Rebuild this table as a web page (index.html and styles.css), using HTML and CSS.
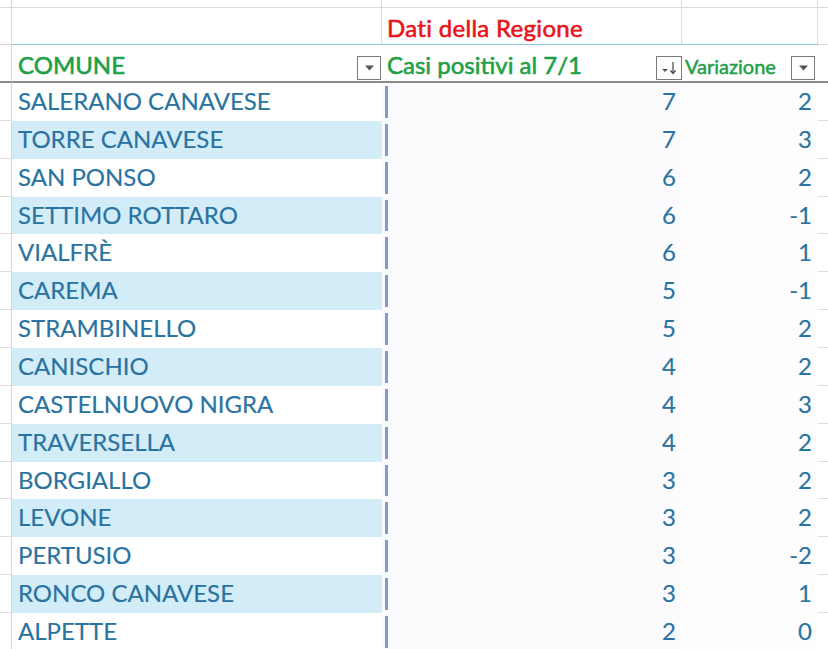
FILE: index.html
```html
<!DOCTYPE html>
<html lang="it">
<head>
<meta charset="utf-8">
<link rel="stylesheet" href="styles.css">
</head>
<body>
<div class="sheet">
  <div class="c a top"></div><div class="c top"></div><div class="c top"></div><div class="c top"></div><div class="c top e"></div>

  <div class="c a r2"></div>
  <div class="c r2 blue"></div>
  <div class="c r2 blue title">Dati della Regione</div>
  <div class="c r2 blue"></div>
  <div class="c r2 e"></div>

  <div class="c a hdr"></div>
  <div class="c hdr hb"><span class="hname">COMUNE</span><span class="fbtn"><svg width="11" height="6" viewBox="0 0 11 6"><path d="M1 0.5h9l-4.5 5z" fill="#555"/></svg></span></div>
  <div class="c hdr hc"><span class="hname">Casi positivi al 7/1</span><span class="fbtn sort"><svg width="20" height="18" viewBox="0 0 20 18"><path d="M3 10h6l-3 3z" fill="#555"/><path d="M14 3v11" stroke="#444" stroke-width="1.2"/><path d="M11.5 11.5l2.5 3 2.5-3" fill="none" stroke="#444" stroke-width="1.2"/></svg></span></div>
  <div class="c hdr hd"><span class="hname small">Variazione</span><span class="fbtn"><svg width="11" height="6" viewBox="0 0 11 6"><path d="M1 0.5h9l-4.5 5z" fill="#555"/></svg></span></div>
  <div class="c hdr e"></div>

  <div class="c a d"></div><div class="c b">SALERANO CANAVESE</div><div class="c n"><i class="bar"></i><span>7</span></div><div class="c v">2</div><div class="c e d"></div>
  <div class="c a d"></div><div class="c b band">TORRE CANAVESE</div><div class="c n"><i class="bar"></i><span>7</span></div><div class="c v">3</div><div class="c e d"></div>
  <div class="c a d"></div><div class="c b">SAN PONSO</div><div class="c n"><i class="bar"></i><span>6</span></div><div class="c v">2</div><div class="c e d"></div>
  <div class="c a d"></div><div class="c b band">SETTIMO ROTTARO</div><div class="c n"><i class="bar"></i><span>6</span></div><div class="c v">-1</div><div class="c e d"></div>
  <div class="c a d"></div><div class="c b">VIALFRÈ</div><div class="c n"><i class="bar"></i><span>6</span></div><div class="c v">1</div><div class="c e d"></div>
  <div class="c a d"></div><div class="c b band">CAREMA</div><div class="c n"><i class="bar"></i><span>5</span></div><div class="c v">-1</div><div class="c e d"></div>
  <div class="c a d"></div><div class="c b">STRAMBINELLO</div><div class="c n"><i class="bar"></i><span>5</span></div><div class="c v">2</div><div class="c e d"></div>
  <div class="c a d"></div><div class="c b band">CANISCHIO</div><div class="c n"><i class="bar"></i><span>4</span></div><div class="c v">2</div><div class="c e d"></div>
  <div class="c a d"></div><div class="c b">CASTELNUOVO NIGRA</div><div class="c n"><i class="bar"></i><span>4</span></div><div class="c v">3</div><div class="c e d"></div>
  <div class="c a d"></div><div class="c b band">TRAVERSELLA</div><div class="c n"><i class="bar"></i><span>4</span></div><div class="c v">2</div><div class="c e d"></div>
  <div class="c a d"></div><div class="c b">BORGIALLO</div><div class="c n"><i class="bar"></i><span>3</span></div><div class="c v">2</div><div class="c e d"></div>
  <div class="c a d"></div><div class="c b band">LEVONE</div><div class="c n"><i class="bar"></i><span>3</span></div><div class="c v">2</div><div class="c e d"></div>
  <div class="c a d"></div><div class="c b">PERTUSIO</div><div class="c n"><i class="bar"></i><span>3</span></div><div class="c v">-2</div><div class="c e d"></div>
  <div class="c a d"></div><div class="c b band">RONCO CANAVESE</div><div class="c n"><i class="bar"></i><span>3</span></div><div class="c v">1</div><div class="c e d"></div>
  <div class="c a d"></div><div class="c b">ALPETTE</div><div class="c n"><i class="bar"></i><span>2</span></div><div class="c v">0</div><div class="c e d"></div>
</div>
</body>
</html>
```

FILE: styles.css
```css
* { box-sizing: border-box; }
html, body { margin: 0; padding: 0; background: #fff; }
body { width: 828px; height: 649px; overflow: hidden; font-family: Lato, "Open Sans", sans-serif; }

.sheet {
  display: grid;
  grid-template-columns: 12px 370px 300px 136px 10px;
  grid-template-rows: 8px 37px 38px repeat(15, 37.86px);
}

.c { display: flex; align-items: center; min-width: 0; overflow: hidden; white-space: nowrap; }

.top { border-bottom: 1px solid #dadada; border-right: 1px solid #dadada; }
.a { border-right: 1px solid #d6d6d6; }
.r2 { border-right: 1px solid #dadada; border-bottom: 1px solid #dadada; }
.r2.blue { border-bottom: 1px solid #8cc4de; }
.r2.a { border-bottom: 1px solid #d6d6d6; }

.title { color: #e8141c; font-size: 24px; padding-left: 5px; padding-top: 2px; -webkit-text-stroke: 0.6px #e8141c; letter-spacing: 0.3px; }

.hdr { border-bottom: 2px solid #8a8a8a; }
.hb, .hc, .hd { justify-content: space-between; align-items: flex-end; padding-bottom: 0; }
.hb { padding-left: 6px; }
.hc { padding-left: 5px; }
.hd { padding-left: 3px; padding-right: 3px; }
.hb .fbtn { margin-right: 1px; }
.hname { color: #1fa048; font-size: 24px; line-height: 32px; -webkit-text-stroke: 0.6px #1fa048; }
.hname.small { font-size: 20px; line-height: 30px; -webkit-text-stroke: 0.5px #1fa048; }

.fbtn {
  width: 24px; height: 24px; border: 1px solid #7a7a7a; background: #fff;
  display: flex; align-items: center; justify-content: center; margin-bottom: 1px;
}
.fbtn.sort { width: 26px; }

.d { border-bottom: 1px solid #dcdcdc; }
.e { border-right: 0; }

.b, .n, .v { color: #2a73a0; font-size: 24px; -webkit-text-stroke: 0.15px #2a73a0; }
.b { padding-left: 6px; padding-bottom: 3px; }
.band { background: #d2ecf8; }
.n { background: #fbfbfe; align-items: stretch; padding-right: 6px; }
.n span { margin-left: auto; display: flex; align-items: center; padding-bottom: 3px; }
.bar { display: block; width: 3px; margin: 3px 0 3px 3px; background: #7d9ccc; }
.v { background: #fdfdfe; justify-content: flex-end; padding-right: 6px; padding-bottom: 3px; }
```
